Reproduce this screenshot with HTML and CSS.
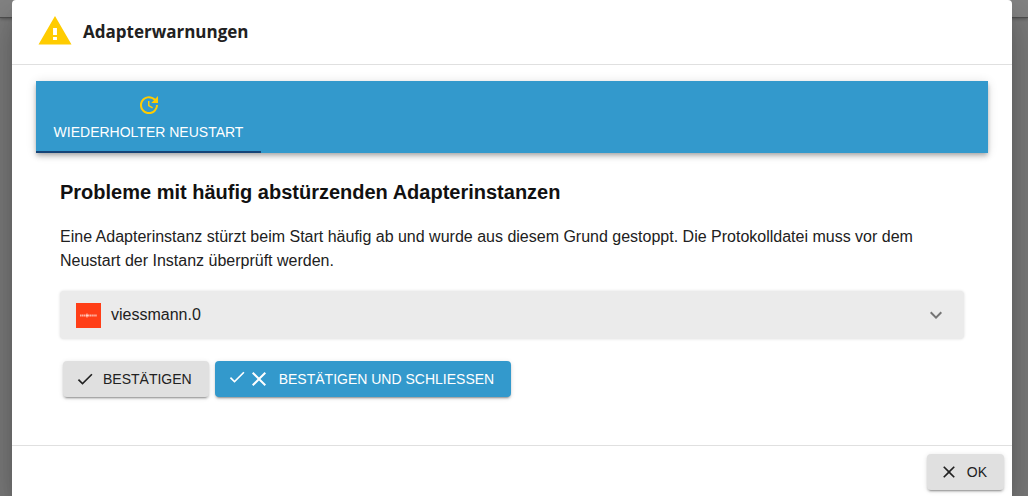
FILE: index.html
```html
<!DOCTYPE html>
<html lang="de">
<head>
<meta charset="utf-8">
<meta name="viewport" content="width=device-width, initial-scale=1">
<title>Adapterwarnungen</title>
<link rel="stylesheet" href="styles.css">
</head>
<body>
<div class="backdrop">
  <div class="app-bar"></div>
  <section class="dialog" role="dialog" aria-modal="true" aria-labelledby="dialog-title">
    <header class="dialog-header">
      <svg class="warning-icon" viewBox="0 0 24 24" aria-hidden="true"><path d="M1 21h22L12 2 1 21zm12.3-3h-2.6v-2h2.6v2zm0-3.3h-2.6V10h2.6v4.7z"/></svg>
      <h1 class="dialog-title" id="dialog-title">Adapterwarnungen</h1>
    </header>
    <main class="dialog-content">
      <div class="tabs" role="tablist">
        <button class="tab" type="button" role="tab" aria-selected="true">
          <svg class="tab-icon" viewBox="0 0 24 24" aria-hidden="true"><path d="M21 10.12h-6.78l2.74-2.82c-2.73-2.7-7.15-2.8-9.88-.1-2.73 2.71-2.73 7.08 0 9.79s7.15 2.71 9.88 0C18.32 15.65 19 14.08 19 12.1h2c0 1.98-.88 4.55-2.64 6.29-3.51 3.48-9.21 3.48-12.72 0-3.5-3.47-3.53-9.11-.02-12.58s9.14-3.47 12.65 0L21 3v7.12zM12.5 8v4.25l3.5 2.08-.72 1.21L11 13V8h1.5z"/></svg>
          <span>WIEDERHOLTER NEUSTART</span>
        </button>
      </div>
      <div class="panel" role="tabpanel">
        <h2 class="panel-title">Probleme mit häufig abstürzenden Adapterinstanzen</h2>
        <p class="panel-text">Eine Adapterinstanz stürzt beim Start häufig ab und wurde aus diesem Grund gestoppt. Die Protokolldatei muss vor dem Neustart der Instanz überprüft werden.</p>
        <button class="accordion" type="button" aria-expanded="false">
          <svg class="adapter-logo" viewBox="0 0 25 25" aria-hidden="true"><path class="logo-ground" d="M0 0h25v25H0z"/><path class="logo-line" d="M4 12.5h17" stroke-dasharray="1.5 .4"/><path class="logo-mark" d="M11 10.5v4M10 12.5h2"/></svg>
          <span class="accordion-name">viessmann.0</span>
          <svg class="chevron" viewBox="0 0 24 24" aria-hidden="true"><path d="M16.59 8.59L12 13.17 7.41 8.59 6 10l6 6 6-6z"/></svg>
        </button>
        <div class="actions">
          <button class="button" type="button">
            <svg class="icon" viewBox="0 0 24 24" aria-hidden="true"><path d="M9 16.17L4.83 12l-1.42 1.41L9 19 21 7l-1.41-1.41z"/></svg>
            <span>BESTÄTIGEN</span>
          </button>
          <button class="button button-primary" type="button">
            <span class="icon-pair">
              <svg class="icon" viewBox="0 0 24 24" aria-hidden="true"><path d="M9 16.17L4.83 12l-1.42 1.41L9 19 21 7l-1.41-1.41z"/></svg>
              <svg class="icon icon-large" viewBox="0 0 24 24" aria-hidden="true"><path d="M19 6.41L17.59 5 12 10.59 6.41 5 5 6.41 10.59 12 5 17.59 6.41 19 12 13.41 17.59 19 19 17.59 13.41 12z"/></svg>
            </span>
            <span>BESTÄTIGEN UND SCHLIESSEN</span>
          </button>
        </div>
      </div>
    </main>
    <footer class="dialog-footer">
      <button class="button" type="button">
        <svg class="icon" viewBox="0 0 24 24" aria-hidden="true"><path d="M19 6.41L17.59 5 12 10.59 6.41 5 5 6.41 10.59 12 5 17.59 6.41 19 12 13.41 17.59 19 19 17.59 13.41 12z"/></svg>
        <span>OK</span>
      </button>
    </footer>
  </section>
</div>
</body>
</html>
```
FILE: styles.css
```css
*, *::before, *::after { box-sizing: border-box; }
body {
  margin: 0;
  color: #212121;
  background: #7c7c7c;
  font-family: "Liberation Sans", Arial, sans-serif;
  font-size: 16px;
  line-height: 24px;
}
h1, h2, p { margin: 0; }
button { font: inherit; color: inherit; border: 0; cursor: pointer; }
svg { display: block; flex: none; fill: currentColor; }

.backdrop {
  position: relative;
  display: flex;
  min-height: 100vh;
  padding: 0 16px 0 12px;
  overflow: hidden;
}
.app-bar {
  position: absolute;
  inset: 0 0 auto;
  height: 18px;
  background: #858585;
  border-bottom: 1px solid #505050;
  box-shadow: 0 1px 3px rgba(0, 0, 0, .3);
}
.dialog {
  position: relative;
  display: flex;
  flex: 1;
  flex-direction: column;
  min-width: 0;
  background: #fff;
  border-radius: 4px 4px 0 0;
  box-shadow: 0 11px 15px -7px rgba(0, 0, 0, .2), 0 24px 38px 3px rgba(0, 0, 0, .14), 0 9px 46px 8px rgba(0, 0, 0, .12);
}
.dialog-header {
  display: flex;
  align-items: center;
  gap: 10px;
  padding: 12px 25px;
  border-bottom: 1px solid #e0e0e0;
}
.warning-icon { width: 36px; height: 38px; margin-bottom: 2px; color: #ffcc00; }
.dialog-title { font: 700 17px/24px "Open Sans", "Noto Sans", sans-serif; }

.dialog-content { flex: 1; padding: 16px 24px; }
.tabs {
  display: flex;
  color: #fff;
  background: #3399cc;
  box-shadow: 0 2px 4px -1px rgba(0, 0, 0, .2), 0 4px 5px rgba(0, 0, 0, .14), 0 1px 10px rgba(0, 0, 0, .12);
}
.tab {
  display: flex;
  flex-direction: column;
  align-items: center;
  justify-content: center;
  gap: 6px;
  min-width: 225px;
  height: 72px;
  padding: 8px 12px 6px;
  background: none;
  border-bottom: 2px solid #164477;
  font-size: 14px;
  line-height: 18px;
}
.tab-icon { width: 24px; height: 24px; color: #ffcc00; }

.panel { padding: 24px; }
.panel-title { font-size: 20px; line-height: 30px; color: #111; }
.panel-text { margin-top: 18px; }
.accordion {
  display: flex;
  align-items: center;
  width: 100%;
  height: 48px;
  margin-top: 18px;
  padding: 0 16px;
  text-align: left;
  background: #ebebeb;
  border-radius: 4px;
  box-shadow: 0 0 3px rgba(0, 0, 0, .14);
}
.adapter-logo { width: 25px; height: 25px; }
.logo-ground { fill: #ff3e17; }
.logo-line, .logo-mark { fill: none; stroke: #ffd2c8; stroke-width: 1; }
.logo-line { stroke-width: 2; opacity: .8; }
.accordion-name { flex: 1; margin-left: 10px; }
.chevron { width: 24px; height: 24px; color: #757575; }

.actions { display: flex; gap: 6px; margin-top: 22px; padding: 0 3px; }
.button {
  display: flex;
  align-items: center;
  justify-content: center;
  gap: 8px;
  height: 36px;
  padding: 0 17px 0 12px;
  background: #e0e0e0;
  border-radius: 4px;
  box-shadow: 0 3px 1px -2px rgba(0, 0, 0, .2), 0 2px 2px rgba(0, 0, 0, .14), 0 1px 5px rgba(0, 0, 0, .12);
  font-size: 14px;
}
.button-primary { color: #fff; background: #3399cc; }
.icon { width: 20px; height: 20px; }
.icon-large { width: 24px; height: 24px; }
.icon-pair { display: flex; align-items: flex-start; }
.dialog-footer {
  display: flex;
  justify-content: flex-end;
  padding: 8px 8px 6px;
  border-top: 1px solid #e0e0e0;
}
```
